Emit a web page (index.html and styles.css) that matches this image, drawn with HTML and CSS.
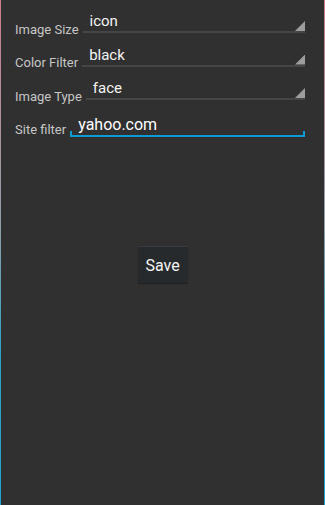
FILE: index.html
```html
<!DOCTYPE html>
<html lang="en">
<head>
    <meta charset="UTF-8">
    <meta name="viewport" content="width=device-width, initial-scale=1.0">
    <title>Search settings</title>
    <link rel="stylesheet" href="styles.css">
</head>
<body>
    <div class="screen">
        <div class="form">
            <div class="row">
                <span class="label">Image Size</span>
                <div class="spinner">
                    <span class="value">icon</span>
                    <span class="arrow"></span>
                </div>
            </div>
            <div class="row">
                <span class="label">Color Filter</span>
                <div class="spinner">
                    <span class="value">black</span>
                    <span class="arrow"></span>
                </div>
            </div>
            <div class="row">
                <span class="label">Image Type</span>
                <div class="spinner">
                    <span class="value">face</span>
                    <span class="arrow"></span>
                </div>
            </div>
            <div class="row">
                <span class="label">Site filter</span>
                <div class="edit">
                    <span class="edit-text">yahoo.com</span>
                </div>
            </div>
        </div>
        <div class="actions">
            <button type="button" class="save">Save</button>
        </div>
    </div>
</body>
</html>
```

FILE: styles.css
```css
body {
    margin: 0;
    padding: 0;
    background-color: #303030;
    font-family: Roboto, 'Liberation Sans', sans-serif;
}
.screen {
    height: 505px;
    box-sizing: border-box;
    border-style: solid;
    border-width: 0 1px;
    border-image: linear-gradient(#cf7f8e, #8fa0a8 45%, #2ea3c8 70%, #1fa6cf) 1;
    background-color: #303030;
}
.form {
    padding: 3px 19px 0 14px;
}
.row {
    display: flex;
    align-items: flex-end;
    height: 33.5px;
}
.label {
    flex: none;
    font-size: 13px;
    line-height: 15px;
    color: #c6c6c6;
}
.spinner {
    flex: 1;
    display: flex;
    align-items: flex-end;
    justify-content: space-between;
    margin: 0 0 3.5px 4px;
    padding-left: 7px;
    border-bottom: 2px solid #464646;
}
.value {
    font-size: 15px;
    line-height: 18px;
    padding-bottom: 1px;
    color: #f4f4f4;
}
.arrow {
    width: 10px;
    height: 10px;
    background-color: #9d9d9d;
    clip-path: polygon(100% 0, 100% 100%, 0 100%);
}
.edit {
    flex: 1;
    margin: 0 0 0.5px 4px;
    padding-left: 8px;
    border-bottom: 2px solid #0c9bd2;
    background:
        linear-gradient(#0c9bd2, #0c9bd2) left bottom / 2px 4px no-repeat,
        linear-gradient(#0c9bd2, #0c9bd2) right bottom / 2px 4px no-repeat;
}
.edit-text {
    display: block;
    font-size: 16px;
    line-height: 19px;
    padding-bottom: 1px;
    color: #ffffff;
}
.actions {
    display: flex;
    justify-content: center;
    margin-top: 109px;
}
.save {
    width: 50px;
    height: 37px;
    padding: 0;
    border: none;
    border-top: 1px solid #383c40;
    border-radius: 1px;
    background-color: #272a2d;
    box-shadow: 0 1px 1px rgba(0, 0, 0, 0.35);
    color: #f4f4f4;
    font-family: Roboto, 'Liberation Sans', sans-serif;
    font-size: 16px;
}
```
